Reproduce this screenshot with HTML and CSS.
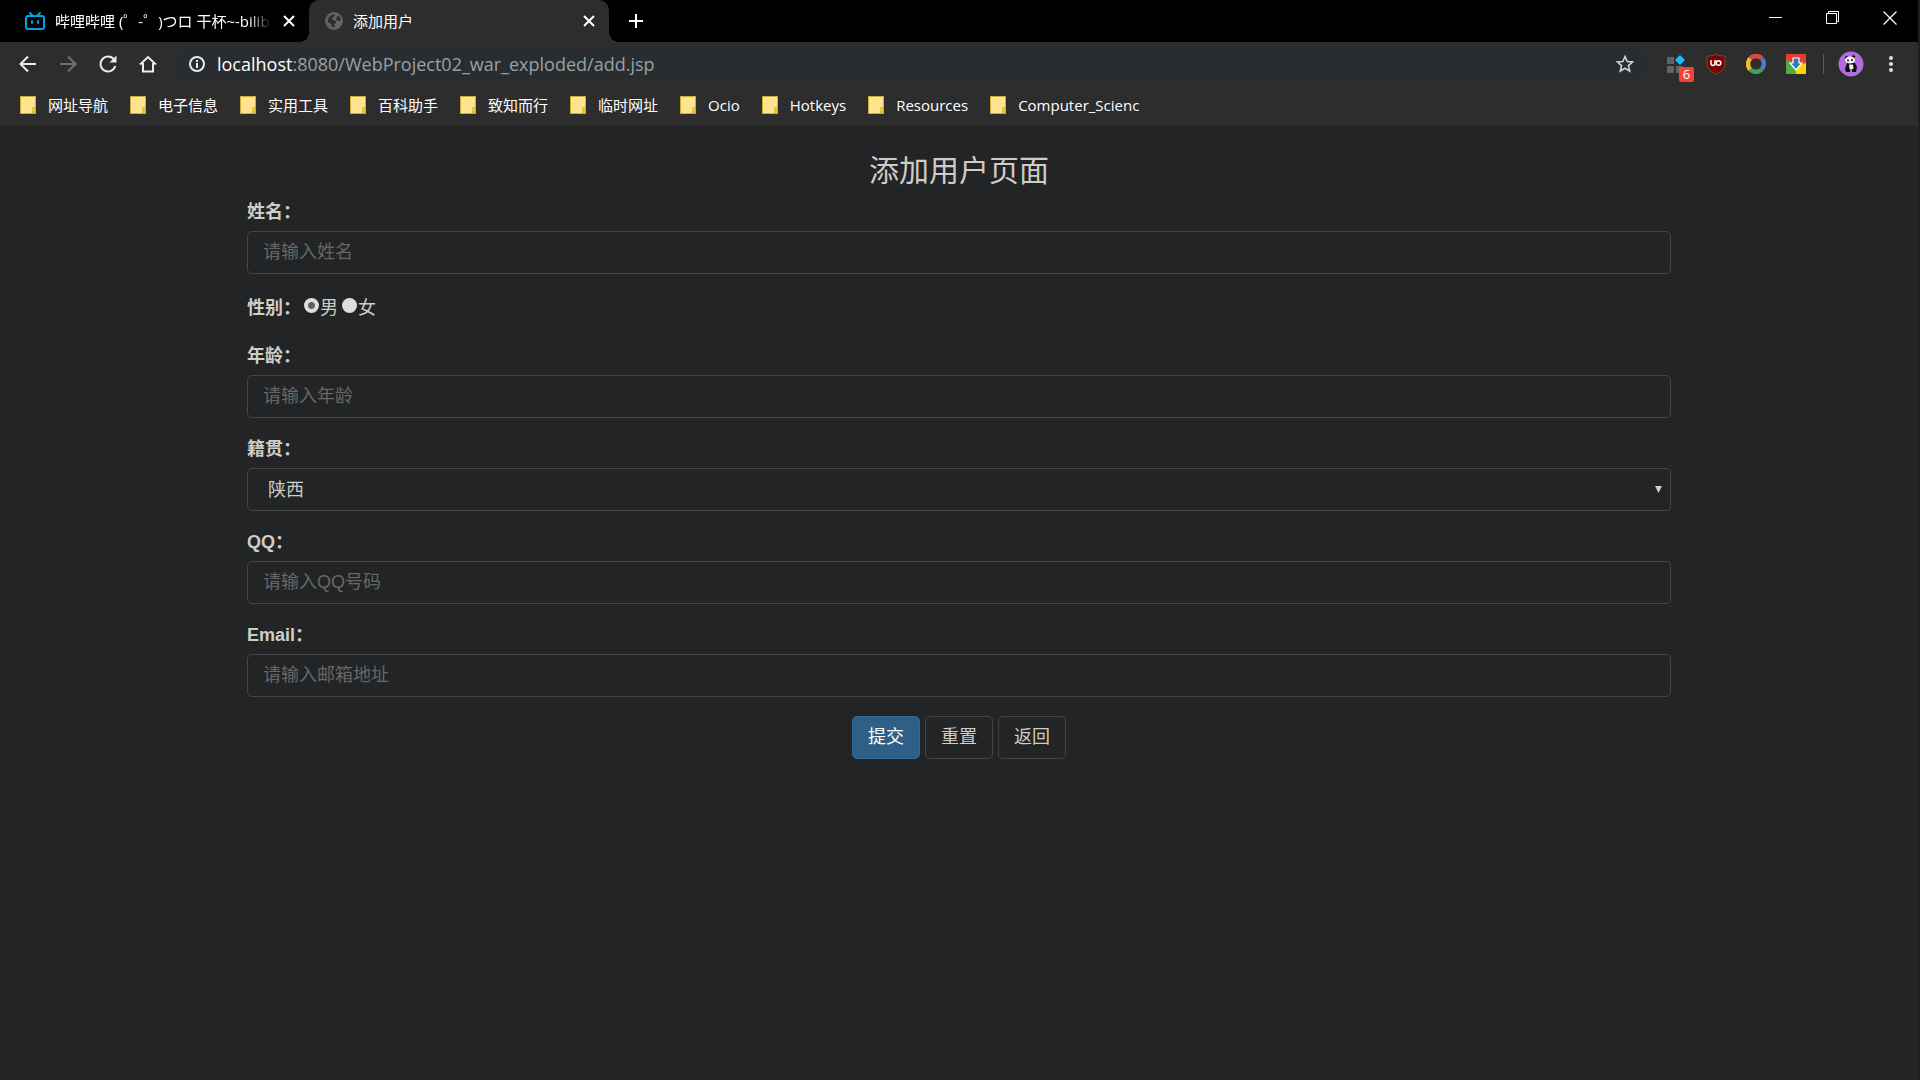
FILE: index.html
```html
<!DOCTYPE html>
<html lang="zh-CN">
<head>
<meta charset="utf-8">
<title>添加用户</title>
<link rel="stylesheet" href="styles.css">
</head>
<body>
<div class="browser">
  <header class="tabstrip">
    <div class="tab">
      <svg class="tab-icon" width="20" height="18" viewBox="0 0 20 18" fill="none" stroke="#00a1e2" stroke-width="2" stroke-linecap="round"><rect x="1" y="4" width="18" height="13" rx="2"/><path d="M5 1l3 3M15 1l-3 3M7 9v2M13 9v2"/></svg>
      <span class="tab-title fade">哔哩哔哩 (゜-゜)つロ 干杯~-bilibili</span>
      <button class="icon-btn tab-close" aria-label="关闭标签页"><svg width="12" height="12" viewBox="0 0 12 12" stroke="#fff" stroke-width="2"><path d="M1 1l10 10M11 1L1 11"/></svg></button>
    </div>
    <div class="tab active">
      <svg class="tab-icon" width="18" height="18" viewBox="0 0 18 18"><circle cx="9" cy="9" r="9" fill="#5f6368"/><path d="M3 7l2-3 4-2 1 2-3 2 1 2 3 1v2l-2 1 1 3h-3l-1-3-3-2zM12 4l3 1 1 3-2 1-3-1z" fill="#2d2d2d"/></svg>
      <span class="tab-title">添加用户</span>
      <button class="icon-btn tab-close" aria-label="关闭标签页"><svg width="12" height="12" viewBox="0 0 12 12" stroke="#fff" stroke-width="2"><path d="M1 1l10 10M11 1L1 11"/></svg></button>
    </div>
    <button class="icon-btn new-tab" aria-label="新标签页"><svg width="16" height="16" viewBox="0 0 16 16" stroke="#fff" stroke-width="2"><path d="M8 1v14M1 8h14"/></svg></button>
    <div class="window-buttons">
      <button class="icon-btn" aria-label="最小化"><svg width="14" height="14" viewBox="0 0 14 14" stroke="#fff"><path d="M0 6.500h13"/></svg></button>
      <button class="icon-btn" aria-label="还原"><svg width="14" height="14" viewBox="0 0 14 14" fill="none" stroke="#fff"><path d="M.5 2.500h10v10H.5zM2.500 2.500v-2h10v10h-2"/></svg></button>
      <button class="icon-btn" aria-label="关闭"><svg width="14" height="14" viewBox="0 0 14 14" stroke="#fff" stroke-width="1.200"><path d="M.5.5l13 13M13.500.5l-13 13"/></svg></button>
    </div>
  </header>

  <nav class="toolbar">
    <button class="icon-btn tool" aria-label="后退"><svg width="18" height="18" viewBox="0 0 18 18" fill="none" stroke="#e8eaed" stroke-width="2"><path d="M17 9H2M9 1.500L1.500 9 9 16.500"/></svg></button>
    <button class="icon-btn tool" aria-label="前进"><svg width="18" height="18" viewBox="0 0 18 18" fill="none" stroke="#717171" stroke-width="2"><path d="M1 9h15M9 1.500L16.500 9 9 16.500"/></svg></button>
    <button class="icon-btn tool" aria-label="重新加载"><svg width="18" height="18" viewBox="0 0 18 18"><path d="M15 4.500A7.500 7.500 0 1 0 16.300 11" fill="none" stroke="#e8eaed" stroke-width="2"/><path d="M17.500.5v7h-7z" fill="#e8eaed"/></svg></button>
    <button class="icon-btn tool" aria-label="主页"><svg width="18" height="18" viewBox="0 0 18 18" fill="none" stroke="#e8eaed" stroke-width="2"><path d="M1 9.500L9 2l8 7.500M4 8v8.500h10V8"/></svg></button>
    <form class="omnibox">
      <button type="button" class="icon-btn info" aria-label="网站信息"><svg width="18" height="18" viewBox="0 0 18 18" fill="none" stroke="#e8eaed" stroke-width="2"><circle cx="9" cy="9" r="7"/><path d="M9 8v5M9 5v2"/></svg></button>
      <a class="url" href="#"><span class="host">localhost</span>:8080/WebProject02_war_exploded/add.jsp</a>
      <button type="button" class="icon-btn star" aria-label="收藏"><svg width="20" height="20" viewBox="0 0 20 20" fill="none" stroke="#d0d3d6" stroke-width="1.600"><path d="M10 2.500l2.200 5 5.300.5-4 3.600 1.200 5.400L10 14.200 5.300 17l1.200-5.400-4-3.600 5.300-.5z"/></svg></button>
    </form>
    <div class="extensions">
      <button class="icon-btn ext" aria-label="扩展管理"><svg width="28" height="28" viewBox="0 0 28 28"><path d="M5 7h7v7H5zM5 16h7v7H5zM14 16h7v7h-7z" fill="#5f6368"/><path d="M18 5l5 5-5 5-5-5z" fill="#12c1ff"/></svg><span class="badge">6</span></button>
      <button class="icon-btn ext" aria-label="uBlock Origin"><svg width="20" height="22" viewBox="0 0 20 22"><path d="M10 1c3 2 6 2 9 2v8c0 5-5 8-9 10-4-2-9-5-9-10V3c3 0 6 0 9-2z" fill="#800000" stroke="#555"/><path d="M5 7v3q0 2.500 2 2.500T9 10V7" fill="none" stroke="#fff" stroke-width="1.500"/><circle cx="12.500" cy="10" r="2.300" fill="none" stroke="#fff" stroke-width="1.500"/></svg></button>
      <button class="icon-btn ext" aria-label="彩环"><svg width="20" height="20" viewBox="0 0 20 20" fill="none" stroke-width="4.500"><path d="M4.200 4.500a8 8 0 0 1 11.600 0" stroke="#de4a3c"/><path d="M15.800 4.500a8 8 0 0 1-.3 11" stroke="#4a7cc8"/><path d="M15.500 15.500a8 8 0 0 1-11.300 0" stroke="#3fa35b"/><path d="M4.200 15.500a8 8 0 0 1 0-11" stroke="#f4b731"/></svg></button>
      <button class="icon-btn ext" aria-label="下载"><svg width="20" height="20" viewBox="0 0 20 20"><path d="M0 0h20v10H0z" fill="#e93c35"/><path d="M0 5l10 7v8H0z" fill="#4caf3f"/><path d="M20 9v11H10v-8z" fill="#ffd400"/><path d="M7 4h6v5h3l-6 7-6-7h3z" fill="#317ab5" stroke="#fff" stroke-width="1.200"/></svg></button>
      <span class="divider"></span>
      <button class="icon-btn ext" aria-label="用户"><svg width="26" height="26" viewBox="0 0 26 26"><circle cx="13" cy="13" r="12.500" fill="#b26be0"/><path d="M9 12h8l2 4-1 5h-4v-3h-2v3H8l-1-3z" fill="#111"/><path d="M11 13.500h4l.5 4.500h-4z" fill="#eee"/><circle cx="8.500" cy="6.500" r="1.600" fill="#111"/><circle cx="15.500" cy="5.500" r="1.600" fill="#111"/><ellipse cx="12" cy="9" rx="5" ry="3.600" fill="#f4f4f4"/><circle cx="10" cy="9.500" r="1" fill="#111"/><circle cx="14" cy="9" r="1" fill="#111"/></svg></button>
      <button class="icon-btn ext" aria-label="菜单"><svg width="6" height="18" viewBox="0 0 6 18" fill="#dee1e4"><circle cx="3" cy="3" r="2"/><circle cx="3" cy="9" r="2"/><circle cx="3" cy="15" r="2"/></svg></button>
    </div>
  </nav>

  <nav class="bookmarks">
    <a class="bookmark" href="#">网址导航</a>
    <a class="bookmark" href="#">电子信息</a>
    <a class="bookmark" href="#">实用工具</a>
    <a class="bookmark" href="#">百科助手</a>
    <a class="bookmark" href="#">致知而行</a>
    <a class="bookmark" href="#">临时网址</a>
    <a class="bookmark" href="#">Ocio</a>
    <a class="bookmark" href="#">Hotkeys</a>
    <a class="bookmark" href="#">Resources</a>
    <a class="bookmark" href="#">Computer_Scienc</a>
  </nav>

  <main class="page">
    <form class="container">
      <h3 class="title">添加用户页面</h3>
      <div class="form-group">
        <label class="field-label" for="name">姓名：</label>
        <input class="form-control" id="name" type="text" placeholder="请输入姓名">
      </div>
      <div class="form-group gender" role="radiogroup" aria-labelledby="gender-label">
        <span class="field-label gender-label" id="gender-label">性别：</span>
        <input class="radio" type="radio" name="gender" id="male" checked><label class="radio-label" for="male">男</label>
        <input class="radio" type="radio" name="gender" id="female"><label class="radio-label" for="female">女</label>
      </div>
      <div class="form-group">
        <label class="field-label" for="age">年龄：</label>
        <input class="form-control" id="age" type="text" placeholder="请输入年龄">
      </div>
      <div class="form-group">
        <label class="field-label" for="address">籍贯：</label>
        <select class="form-control" id="address"><option>陕西</option></select>
      </div>
      <div class="form-group">
        <label class="field-label" for="qq">QQ：</label>
        <input class="form-control" id="qq" type="text" placeholder="请输入QQ号码">
      </div>
      <div class="form-group">
        <label class="field-label" for="email">Email：</label>
        <input class="form-control" id="email" type="text" placeholder="请输入邮箱地址">
      </div>
      <div class="actions">
        <button class="btn btn-primary" type="submit">提交</button>
        <button class="btn" type="reset">重置</button>
        <button class="btn" type="button">返回</button>
      </div>
    </form>
  </main>
</div>
</body>
</html>
```

FILE: styles.css
```css
*,
*::before,
*::after { box-sizing: border-box; }

body {
  margin: 0;
  background: #222426;
  color: #d0ccc6;
  font-family: "Liberation Sans", "Noto Sans CJK SC", sans-serif;
  font-size: 18px;
  line-height: 25px;
}

button { font: inherit; color: inherit; }
a { color: inherit; text-decoration: none; }

.browser {
  display: flex;
  flex-direction: column;
  min-height: 100vh;
  border-right: 2px solid #1e1f20;
}

.icon-btn {
  display: flex;
  flex: none;
  align-items: center;
  justify-content: center;
  padding: 0;
  border: 0;
  background: none;
}

.tabstrip,
.toolbar,
.bookmarks {
  font-family: "Open Sans", "Noto Sans CJK SC", sans-serif;
  color: #fff;
}

/* Tab strip */
.tabstrip {
  display: flex;
  height: 42px;
  padding-left: 9px;
  background: #000;
  font-size: 15px;
}

.tab {
  position: relative;
  display: flex;
  align-items: center;
  width: 300px;
  gap: 10px;
  padding: 0 12px 0 16px;
}

.tab.active {
  border-radius: 10px 10px 0 0;
  background: #2d2d2d;
}

.tab.active::before,
.tab.active::after {
  content: "";
  position: absolute;
  bottom: 0;
  width: 10px;
  height: 10px;
}

.tab.active::before {
  right: 100%;
  background: radial-gradient(circle at 0 0, #000 10px, #2d2d2d 10px);
}

.tab.active::after {
  left: 100%;
  background: radial-gradient(circle at 100% 0, #000 10px, #2d2d2d 10px);
}

.tab-icon { flex: none; }

.tab-title {
  flex: 1;
  overflow: hidden;
  white-space: nowrap;
}

.fade { mask-image: linear-gradient(to right, #000 90%, transparent); }

.tab-close { width: 16px; height: 16px; }
.new-tab { width: 54px; }

.window-buttons {
  display: flex;
  margin-left: auto;
}

.window-buttons .icon-btn { width: 57px; height: 36px; }

/* Toolbar */
.toolbar {
  display: flex;
  align-items: center;
  height: 44px;
  padding: 0 7px 0 8px;
  background: #2d2d2d;
}

.tool { width: 40px; height: 36px; }

.omnibox {
  display: flex;
  flex: 1;
  align-items: center;
  height: 35px;
  margin: 0 8px 0 7px;
  padding: 0 13px;
  border-radius: 18px;
  background: #292d2f;
}

.url {
  flex: 1;
  margin-left: 11px;
  color: #9aa0a6;
  font-size: 18px;
}

.host { color: #fff; }

.extensions {
  display: flex;
  align-items: center;
}

.ext {
  position: relative;
  width: 40px;
  height: 36px;
}

.badge {
  position: absolute;
  right: 2px;
  bottom: 0;
  width: 15px;
  height: 15px;
  border-radius: 2px;
  background: #f44336;
  font-size: 13px;
  line-height: 15px;
}

.divider {
  width: 1px;
  height: 20px;
  margin: 0 7px;
  background: #5a5a5a;
}

/* Bookmarks */
.bookmarks {
  display: flex;
  align-items: center;
  height: 41px;
  gap: 22px;
  padding: 0 20px 2px;
  border-bottom: 1px solid #202020;
  background: #2d2d2d;
  font-size: 15px;
}

.bookmark {
  display: flex;
  align-items: center;
  gap: 12px;
}

.bookmark::before {
  content: "";
  width: 16px;
  height: 18px;
  border: 1px solid #cfa93a;
  background: linear-gradient(#e8c232, #e8c232) no-repeat right bottom / 3px 6px, #ffe48f;
}

/* User form */
.page { flex: 1; }

.container {
  width: 100%;
  max-width: 1462px;
  margin: 0 auto;
  padding: 27px 19px;
}

.title {
  margin: 0 0 13px;
  font-size: 30px;
  font-weight: 400;
  line-height: 33px;
  text-align: center;
}

.form-group { margin-bottom: 19px; }

.field-label {
  display: block;
  margin-bottom: 6px;
  font-weight: 700;
}

.form-control {
  display: block;
  width: 100%;
  height: 43px;
  padding: 0 15px;
  border: 1px solid #434648;
  border-radius: 5px;
  background: #222426;
  color: inherit;
  font: inherit;
}

.form-control::placeholder { color: #686764; }

select.form-control {
  appearance: none;
  padding: 2px 20px 0;
  background: #222426 url("data:image/svg+xml,%3Csvg xmlns='http://www.w3.org/2000/svg' width='7' height='7'%3E%3Cpath d='M0 0h7L3.500 7z' fill='%23d0ccc6'/%3E%3C/svg%3E") no-repeat right 8px center;
}

.gender {
  display: flex;
  align-items: center;
  height: 30px;
  margin-bottom: 21px;
}

.gender-label { margin: 0 3px 0 0; }

.radio {
  appearance: none;
  width: 15px;
  height: 15px;
  margin: 0 1px 5px 0;
  border-radius: 50%;
  background: #dedede;
}

.radio:checked { background: radial-gradient(circle, #606060 3px, #dedede 4px); }
.radio-label { margin-right: 4px; }

.actions {
  display: flex;
  justify-content: center;
  gap: 5px;
}

.btn {
  height: 43px;
  padding: 0 15px;
  border: 1px solid #434648;
  border-radius: 5px;
  background: #222426;
}

.btn-primary {
  border-color: #2f6a9c;
  background: #2e5f87;
  color: #fff;
}
```
